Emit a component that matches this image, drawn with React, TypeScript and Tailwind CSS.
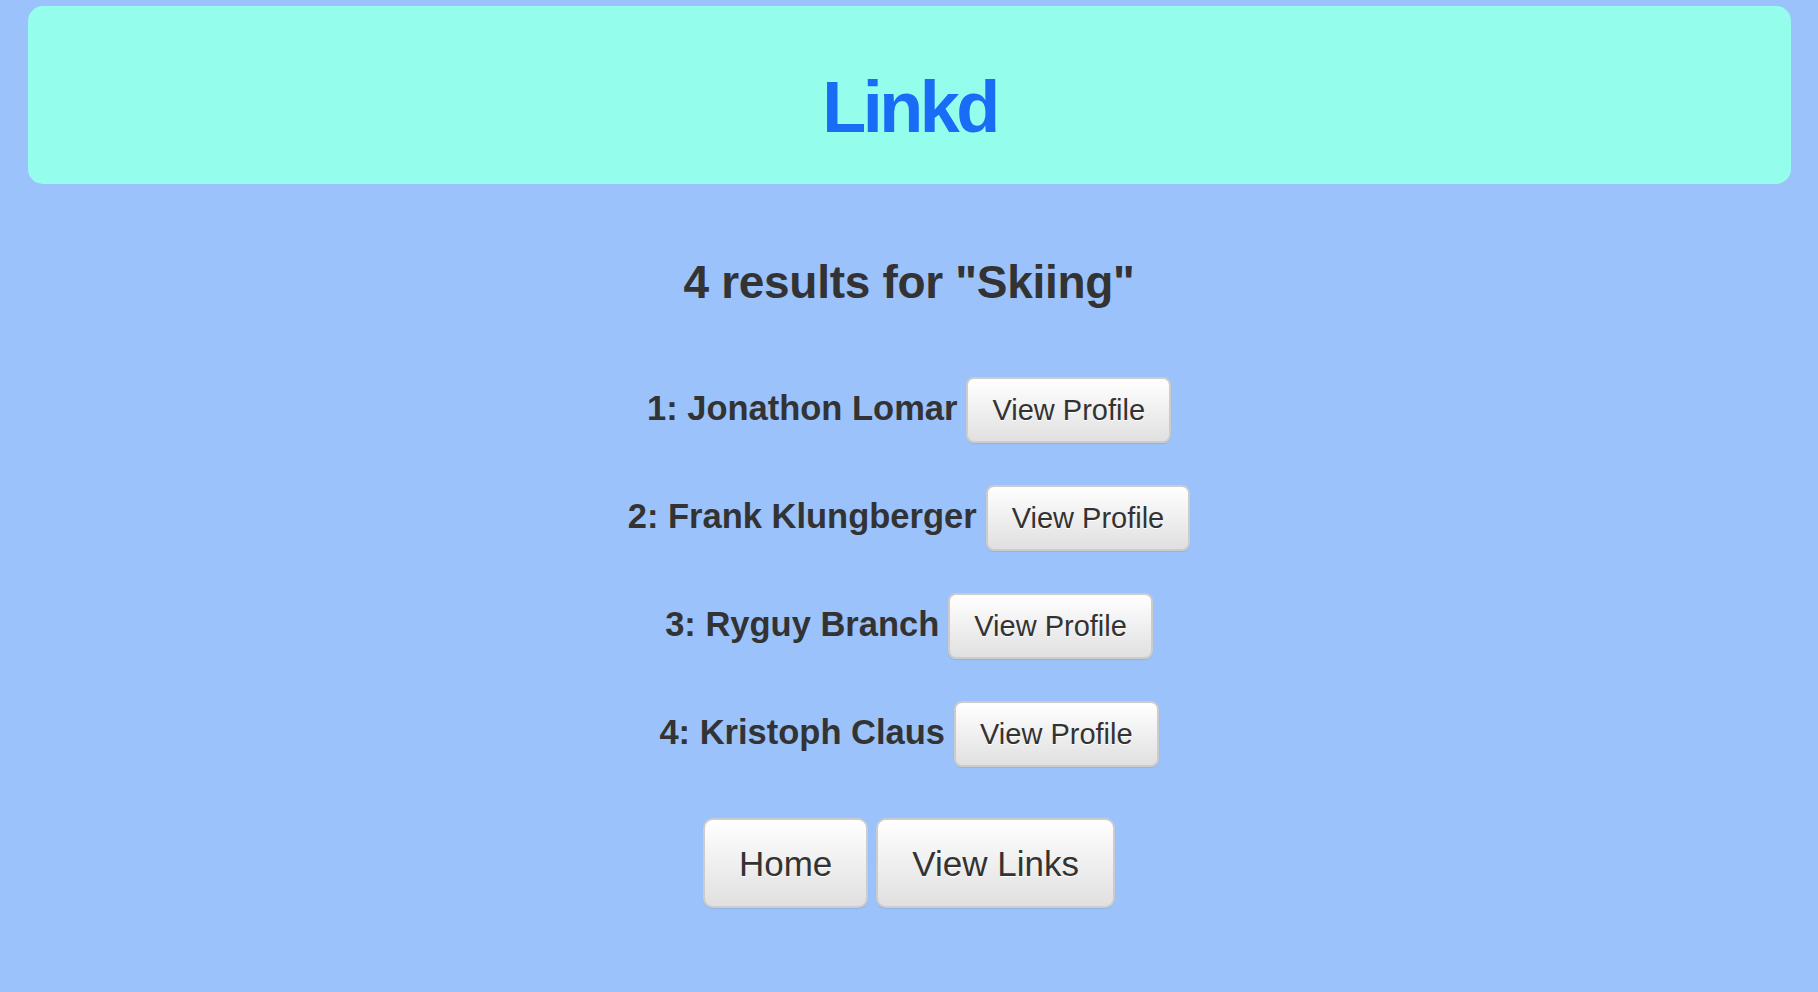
import React from 'react';

const results = ['Jonathon Lomar', 'Frank Klungberger', 'Ryguy Branch', 'Kristoph Claus'];

const btn =
  "bg-linear-to-b from-white to-[#e0e0e0] border-2 border-[#cccccc] text-[#333] font-['Liberation_Sans',Arial,sans-serif] shadow-[0_1px_1px_rgba(0,0,0,0.08)] text-shadow-[0_1px_0_#fff] leading-none";

export default function App() {
  return (
    <div className="min-h-screen bg-[#9bc2fa] pt-[6px] pb-[40px] font-['Liberation_Sans',Arial,sans-serif]">
      {/* Header */}
      <div className="ml-[28px] mr-[27px] h-[178px] rounded-[15px] bg-[#95fdeb] pt-[65px] text-center">
        <h1 className="text-[72px] leading-none font-bold tracking-[-3.5px] text-[#186cf5]">Linkd</h1>
      </div>

      {/* Results */}
      <div className="flex flex-col items-center text-[#333]">
        <h3 className="mt-[75px] text-[46px] leading-none font-bold tracking-[-0.3px]">4 results for "Skiing"</h3>
        <div className="mt-[72px] flex flex-col items-center gap-[42px]">
          {results.map((name, i) => (
            <div key={name} className="flex items-center gap-[9px] h-[66px]">
              <span className="text-[34.5px] leading-none font-bold -mt-[3px]">
                {i + 1}: {name}
              </span>
              <button className={`${btn} h-[66px] px-[24px] rounded-[8px] text-[29px]`}>View Profile</button>
            </div>
          ))}
        </div>
      </div>

      {/* Footer buttons */}
      <div className="mt-[51px] flex justify-center gap-[8px]">
        <button className={`${btn} h-[90px] px-[34px] rounded-[10px] text-[35px]`}>Home</button>
        <button className={`${btn} h-[90px] px-[34px] rounded-[10px] text-[35px]`}>View Links</button>
      </div>
    </div>
  );
}
